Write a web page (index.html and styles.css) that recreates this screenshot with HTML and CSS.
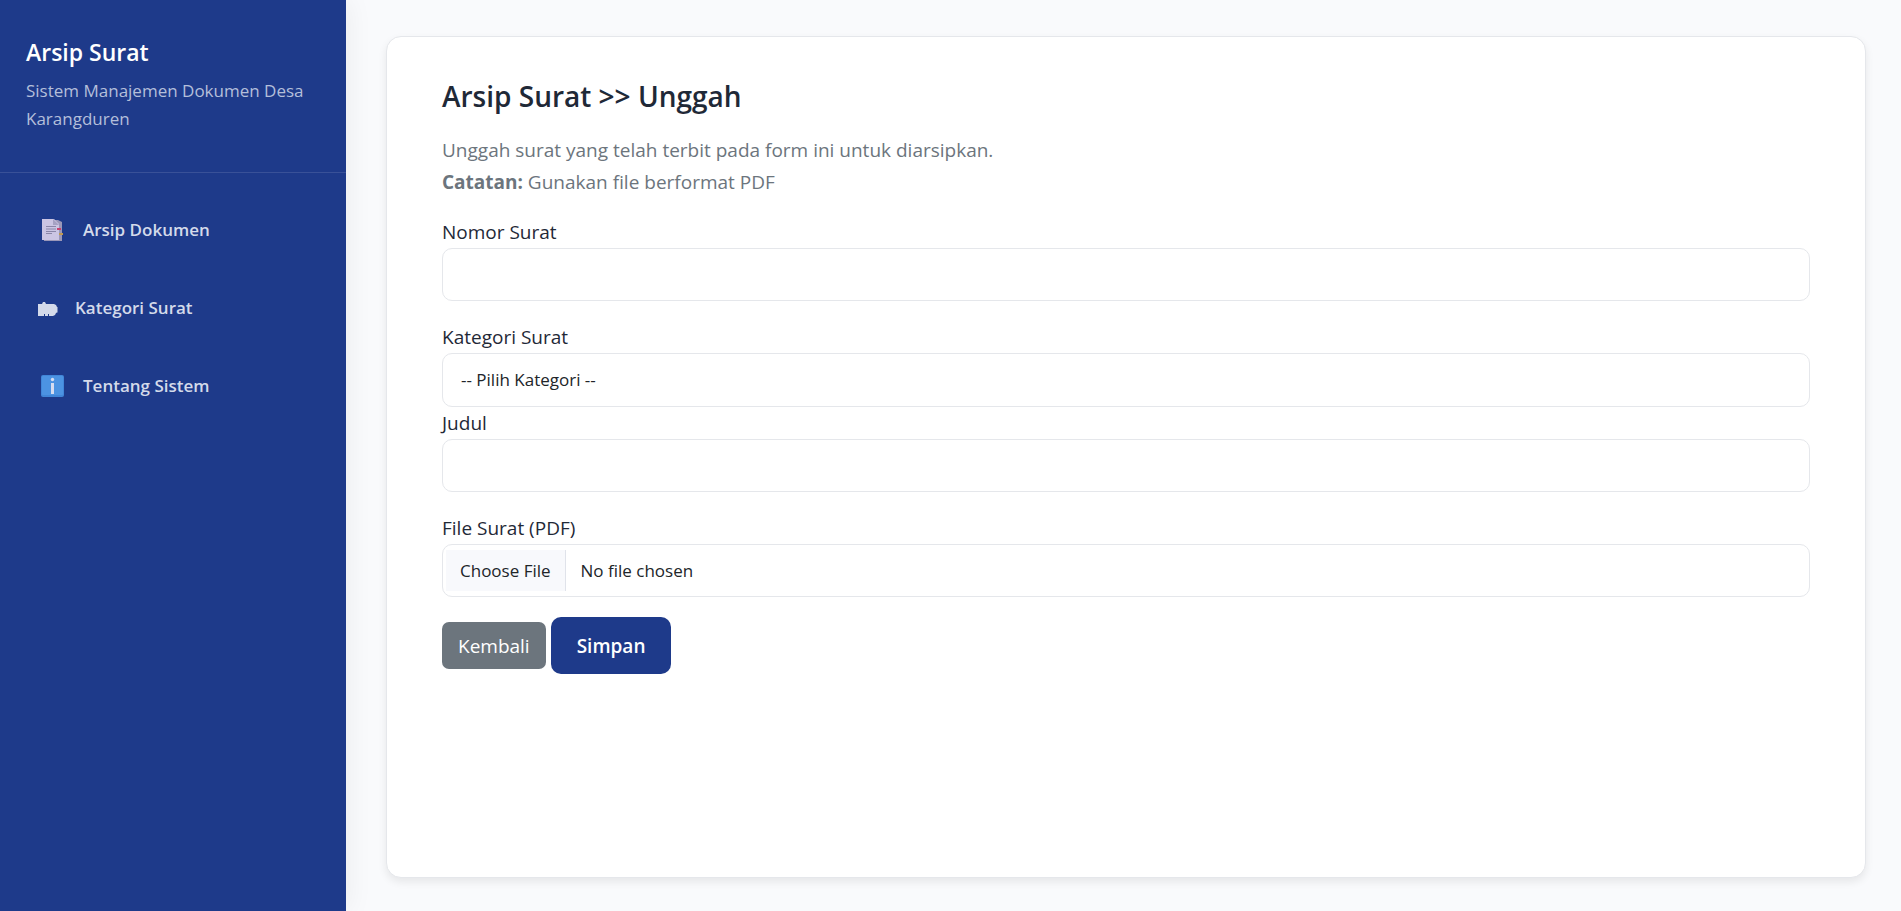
FILE: index.html
```html
<!DOCTYPE html>
<html lang="id">
<head>
<meta charset="utf-8">
<meta name="viewport" content="width=device-width, initial-scale=1">
<title>Arsip Surat - Unggah</title>
<link rel="stylesheet" href="styles.css">
</head>
<body>
<aside class="sidebar">
  <header class="brand">
    <h1 class="brand-title">Arsip Surat</h1>
    <p class="brand-text">Sistem Manajemen Dokumen Desa Karangduren</p>
  </header>
  <nav class="menu">
    <a class="menu-link" href="#arsip">
      <svg class="icon icon-wide" viewBox="0 0 28 24" aria-hidden="true">
        <path fill="#9a97b8" d="M6 2h14l4 2v19H6z"/>
        <path fill="#cbc5e3" d="M4 1h12l5 5v16H4z"/>
        <path fill="#a5a1c2" d="M15 1l6 6h-6z"/>
        <path stroke="#8a86a8" stroke-width="1" d="M8 8.500h10M8 11h10M8 13.500h10M8 15.500h6"/>
        <path fill="#c8416f" d="M19 10h4v2h-4z"/>
        <path fill="#bf9a50" d="M21 15h4v2h-4z"/>
      </svg>
      <span>Arsip Dokumen</span>
    </a>
    <a class="menu-link" href="#kategori">
      <svg class="icon" viewBox="0 0 20 24" aria-hidden="true">
        <path fill="#d4daea" d="M0 8h4l1-2h2l1 2h8l2 1 1 2 1 1-1 1 1 1-1 1 1 1-2 1-1 2-2 1h-4v-2h-1v2H7v-2H6v2H0z"/>
      </svg>
      <span>Kategori Surat</span>
    </a>
    <a class="menu-link" href="#tentang">
      <svg class="icon icon-wide" viewBox="0 0 28 24" aria-hidden="true">
        <rect x="3" y="1" width="23" height="22" rx="2" fill="#4186d8"/>
        <rect x="4" y="2" width="21" height="19" rx="1" fill="#4c93e2"/>
        <circle cx="14.500" cy="5.500" r="1.700" fill="#d6dcf0"/>
        <path fill="#d6dcf0" d="M13 9h3v11h-3z"/>
      </svg>
      <span>Tentang Sistem</span>
    </a>
  </nav>
</aside>
<main class="main">
  <section class="card">
    <h2 class="card-title">Arsip Surat &gt;&gt; Unggah</h2>
    <p class="intro">Unggah surat yang telah terbit pada form ini untuk diarsipkan.<br><strong>Catatan:</strong> Gunakan file berformat PDF</p>
    <form>
      <div class="field">
        <label for="nomor">Nomor Surat</label>
        <input class="control" id="nomor" type="text">
      </div>
      <div class="field field-tight">
        <label for="kategori">Kategori Surat</label>
        <select class="control" id="kategori"><option>-- Pilih Kategori --</option></select>
      </div>
      <div class="field">
        <label for="judul">Judul</label>
        <input class="control" id="judul" type="text">
      </div>
      <div class="field">
        <label for="file">File Surat (PDF)</label>
        <input class="control control-file" id="file" type="file" accept="application/pdf">
      </div>
      <div class="actions">
        <a class="btn btn-back" href="#kembali">Kembali</a>
        <button class="btn btn-save" type="submit">Simpan</button>
      </div>
    </form>
  </section>
</main>
</body>
</html>
```

FILE: styles.css
```css
* {
  box-sizing: border-box;
}

body {
  margin: 0;
  min-height: 100vh;
  display: flex;
  background: #f9fafc;
  color: #1f2937;
  font: 19px/32px "Segoe UI", "Open Sans", "Noto Sans", sans-serif;
}

h1, h2, p {
  margin: 0;
}

.sidebar {
  flex: 0 0 346px;
  background: #1e3a8a;
  box-shadow: 4px 0 24px rgba(0, 0, 0, 0.05);
}

.brand {
  padding: 36px 26px 39px;
  border-bottom: 1px solid rgba(255, 255, 255, 0.12);
}

.brand-title {
  margin-bottom: 9px;
  color: #fff;
  font-size: 23px;
  font-weight: 600;
  line-height: 32px;
}

.brand-text {
  color: #b4bfda;
  font-size: 17px;
  line-height: 28px;
}

.menu {
  display: flex;
  flex-direction: column;
  gap: 14px;
  padding: 25px 0;
}

.menu-link {
  display: flex;
  align-items: center;
  gap: 17px;
  height: 64px;
  padding: 0 38px;
  color: #d4daea;
  font-size: 17px;
  font-weight: 600;
  text-decoration: none;
}

.icon {
  width: 20px;
  height: 24px;
  fill: none;
}

.icon-wide {
  width: 28px;
}

.main {
  flex: 1;
  min-width: 0;
  display: flex;
  padding: 36px 35px 33px 40px;
}

.card {
  flex: 1;
  min-width: 0;
  padding: 41px 55px;
  background: #fff;
  border: 1px solid #e5e7eb;
  border-radius: 15px;
  box-shadow: 0 4px 8px rgba(0, 0, 0, 0.08);
}

.card-title {
  margin-bottom: 20px;
  font-size: 28px;
  font-weight: 600;
  line-height: 36px;
}

.intro {
  margin-bottom: 18px;
  color: #6c757d;
}

.field {
  margin-bottom: 20px;
}

.field-tight {
  margin-bottom: 0;
}

.field label {
  display: block;
}

.control {
  display: block;
  width: 100%;
  height: 53px;
  padding: 0 18px;
  appearance: none;
  background: #fff;
  border: 1px solid #e5e7eb;
  border-radius: 10px;
  color: #212529;
  font: inherit;
  font-size: 17px;
}

select.control {
  height: 54px;
}

.control-file {
  padding: 5px 3px;
  line-height: 41px;
}

.control-file::file-selector-button {
  height: 41px;
  margin: 0 15px 0 0;
  padding: 0 14px;
  background: #f8f9fc;
  border: 0;
  border-right: 1px solid #e0e3ea;
  color: #212529;
  font: inherit;
}

.actions {
  display: flex;
  align-items: center;
  gap: 5px;
}

.btn {
  border: 0;
  color: #fff;
  font: inherit;
  text-decoration: none;
}

.btn-back {
  padding: 8px 16px 7px;
  background: #6c757d;
  border-radius: 7px;
}

.btn-save {
  padding: 13px 26px 12px;
  background: #1e3a8a;
  border-radius: 10px;
  font-weight: 600;
}
```
